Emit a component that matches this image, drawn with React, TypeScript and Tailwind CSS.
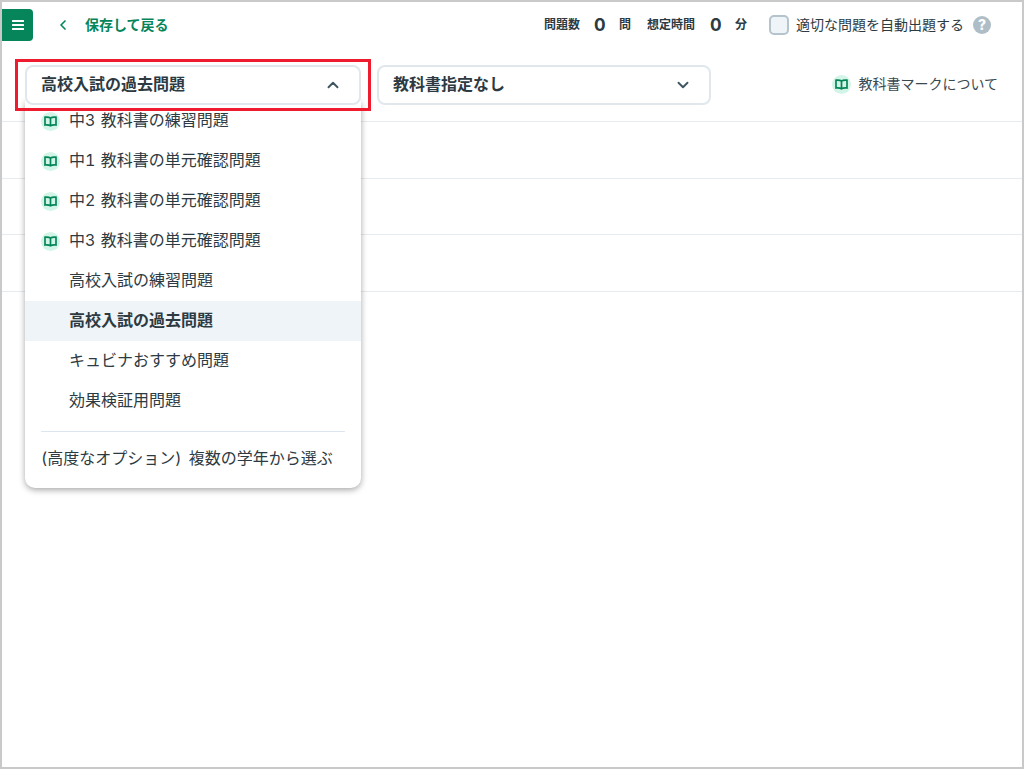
import { ChevronDown, ChevronLeft, ChevronUp } from 'lucide-react';

const menuItems = [
    { label: '中3 教科書の練習問題', book: true },
    { label: '中1 教科書の単元確認問題', book: true },
    { label: '中2 教科書の単元確認問題', book: true },
    { label: '中3 教科書の単元確認問題', book: true },
    { label: '高校入試の練習問題', book: false },
    { label: '高校入試の過去問題', book: false, active: true },
    { label: 'キュビナおすすめ問題', book: false },
    { label: '効果検証用問題', book: false },
];

function BookMark() {
    return (
        <span className="flex h-[19px] w-[19px] shrink-0 items-center justify-center rounded-full bg-[#d3f5e7]">
            <svg width="13" height="11" viewBox="0 0 13 11" fill="none" stroke="#06855a" strokeWidth="1.7">
                <path d="M6.5 2 C5 1 3 1 1 1.2 V9 C3 8.8 5 8.8 6.5 9.8 C8 8.8 10 8.8 12 9 V1.2 C10 1 8 1 6.5 2 Z M6.5 2 V9.8" />
            </svg>
        </span>
    );
}

export default function App() {
    return (
        <div className="relative h-[769px] w-[1024px] overflow-hidden border-2 border-[#c9c9c9] bg-white font-['Inter','Noto_Sans_CJK_JP',sans-serif] text-[#2d3a42] tabular-nums">
            {/* Header */}
            <div className="flex h-[46px] items-center pr-[31px]">
                <button className="flex h-[32px] w-[31px] items-center justify-center rounded-r-[4px] bg-[#06855a]">
                    <svg width="12" height="10" viewBox="0 0 12 10" fill="#fff">
                        <rect y="0" width="12" height="2" rx="0.5" />
                        <rect y="4" width="12" height="2" rx="0.5" />
                        <rect y="8" width="12" height="2" rx="0.5" />
                    </svg>
                </button>
                <ChevronLeft className="ml-[22px] h-[16px] w-[16px] text-[#06855a]" strokeWidth={2.5} />
                <span className="ml-[14px] pb-[2px] text-[14px] font-bold text-[#06855a]">保存して戻る</span>
                <div className="ml-auto flex items-center">
                    <span className="pb-[1px] text-[12px] font-bold">問題数</span>
                    <span className="ml-[14px] w-[12px] text-[18px] font-bold leading-none">0</span>
                    <span className="ml-[13px] pb-[1px] text-[12px] font-bold">問</span>
                    <span className="ml-[16px] pb-[1px] text-[12px] font-bold">想定時間</span>
                    <span className="ml-[15px] w-[12px] text-[18px] font-bold leading-none">0</span>
                    <span className="ml-[13px] pb-[1px] text-[12px] font-bold">分</span>
                    <span className="ml-[22px] h-[20px] w-[20px] rounded-[5px] border-2 border-[#b4c3cc] bg-[#eff4f8]" />
                    <span className="ml-[7px] pb-[2px] text-[14px]">適切な問題を自動出題する</span>
                    <span className="ml-[9px] flex h-[18px] w-[18px] items-center justify-center rounded-full bg-[#aebdc6] text-[14px] font-extrabold leading-none text-white">?</span>
                </div>
            </div>

            {/* Select row */}
            <div className="flex h-[74px] items-start border-b border-[#e6ebef] pl-[23px] pr-[24px] pt-[17px]">
                <div className="relative z-10 flex h-[40px] w-[336px] items-center justify-between rounded-[8px] border-2 border-[#e0e8ee] bg-white pl-[14px] pr-[17px]">
                    <span className="pb-[2px] text-[16px] font-bold">高校入試の過去問題</span>
                    <ChevronUp className="h-[18px] w-[18px] text-[#3f5560]" strokeWidth={2.5} />
                </div>
                <div className="ml-[16px] flex h-[40px] w-[334px] items-center justify-between rounded-[8px] border-2 border-[#e0e8ee] pl-[14px] pr-[17px]">
                    <span className="pb-[2px] text-[16px] font-bold">教科書指定なし</span>
                    <ChevronDown className="h-[18px] w-[18px] text-[#3f5560]" strokeWidth={2.5} />
                </div>
                <div className="ml-auto flex h-[38px] items-center">
                    <BookMark />
                    <span className="ml-[7px] pb-[1px] text-[14px] text-[#3a4850]">教科書マークについて</span>
                </div>
            </div>

            {/* Empty rows behind the menu */}
            <div className="h-[57px] border-b border-[#e6ebef]" />
            <div className="h-[56px] border-b border-[#e6ebef]" />
            <div className="h-[57px] border-b border-[#e6ebef]" />

            {/* Dropdown menu */}
            <div className="absolute left-[23px] top-[99px] w-[336px] rounded-b-[10px] bg-white pb-[9px] shadow-[0_2px_6px_rgba(0,0,0,0.35)]">
                {menuItems.map((item) => (
                    <div
                        key={item.label}
                        className={`flex h-[40px] items-center pl-[16px] text-[16px] [word-spacing:1px] ${item.active ? 'bg-[#eff4f8] font-bold' : ''}`}
                    >
                        <span className="w-[28px] shrink-0">{item.book && <BookMark />}</span>
                        <span className="pb-[2px]">{item.label}</span>
                    </div>
                ))}
                <div className="mx-[16px] mb-[7px] mt-[10px] border-t border-[#dde6ee]" />
                <div className="flex h-[40px] items-center pb-[2px] pl-[16px] text-[16px] [word-spacing:3px]">(高度なオプション) 複数の学年から選ぶ</div>
            </div>

            {/* Annotation box */}
            <div className="absolute left-[13px] top-[57px] z-20 h-[52px] w-[356px] border-[3px] border-[#ee1c2e]" />
        </div>
    );
}
